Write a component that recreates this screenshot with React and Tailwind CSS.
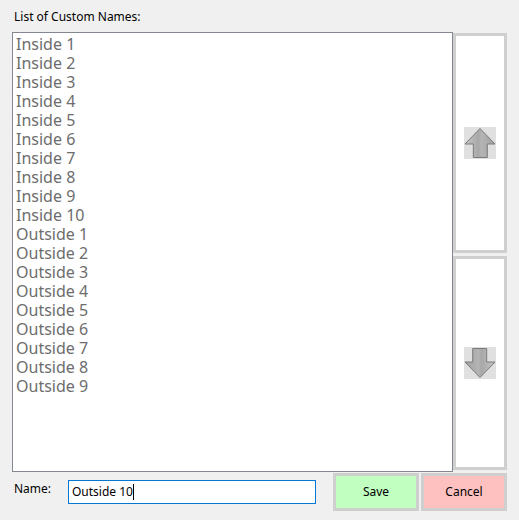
import React from "react";

const items = [
  "Inside 1","Inside 2","Inside 3","Inside 4","Inside 5","Inside 6","Inside 7","Inside 8","Inside 9","Inside 10",
  "Outside 1","Outside 2","Outside 3","Outside 4","Outside 5","Outside 6","Outside 7","Outside 8","Outside 9",
];

function Arrow({ down }) {
  const id = down ? "gd" : "gu";
  return (
    <svg width="32" height="32" viewBox="0 0 32 32" className="block">
      <defs>
        <linearGradient id={id} x1="0" y1="0" x2="1" y2="0">
          <stop offset="0" stopColor="#c4c4c4" />
          <stop offset="0.45" stopColor="#a8a8a8" />
          <stop offset="0.55" stopColor="#b4b4b4" />
          <stop offset="1" stopColor="#a0a0a0" />
        </linearGradient>
      </defs>
      <rect x="0" y="0" width="32" height="32" fill="#e0e0e0" />
      <g transform={down ? "rotate(180 16 16)" : undefined}>
        <polygon
          points="16,1.5 31,17 23.3,17 23.3,30.5 9.3,30.5 9.3,17 1,17"
          fill={`url(#${id})`}
          stroke="#7a7a7a"
          strokeWidth="1"
          strokeLinejoin="miter"
        />
      </g>
    </svg>
  );
}

export default function App() {
  return (
    <div
      className="w-[519px] h-[520px] bg-[#f0f0f0] pt-[9px] pl-[12px] text-black"
      style={{ fontFamily: '"Noto Sans", "Open Sans", sans-serif' }}
    >
      <div className="pl-[2px] text-[12px] leading-[16px] h-[16px]">List of Custom Names:</div>
      <div className="flex mt-[7px] h-[440px]">
        <div className="w-[441px] h-[440px] bg-white border border-[#828790] pl-[3px] pt-[2px] text-[16px] leading-[19px] text-[#6d6d6d] overflow-hidden">
          {items.map((t) => (
            <div key={t} className="h-[19px]">{t}</div>
          ))}
        </div>
        <div className="w-[54px] flex flex-col gap-[3px] pt-[1px]">
          <div className="h-[220px] bg-white border-[3px] border-[#cfcfcf] flex items-center justify-center">
            <Arrow />
          </div>
          <div className="h-[214px] bg-white border-[3px] border-[#cfcfcf] flex items-center justify-center">
            <Arrow down />
          </div>
        </div>
      </div>
      <div className="flex mt-[1px] h-[38px]">
        <div className="w-[321px] flex items-start">
          <div className="pl-[2px] w-[56px] pt-[8px] text-[12px] leading-[16px]">Name:</div>
          <div className="mt-[7px] w-[248px] h-[24px] bg-white border border-[#0078d7] pl-[3px] text-[12px] leading-[22px] flex items-center">
            <span>Outside 10</span>
            <span className="inline-block w-[1px] h-[16px] bg-black"></span>
          </div>
        </div>
        <button className="w-[86px] h-[38px] bg-[#c0ffc0] border-[3px] border-[#cfcfcf] text-[12px]">Save</button>
        <button className="ml-[2px] w-[86px] h-[38px] bg-[#ffc0c0] border-[3px] border-[#cfcfcf] text-[12px]">Cancel</button>
      </div>
    </div>
  );
}
